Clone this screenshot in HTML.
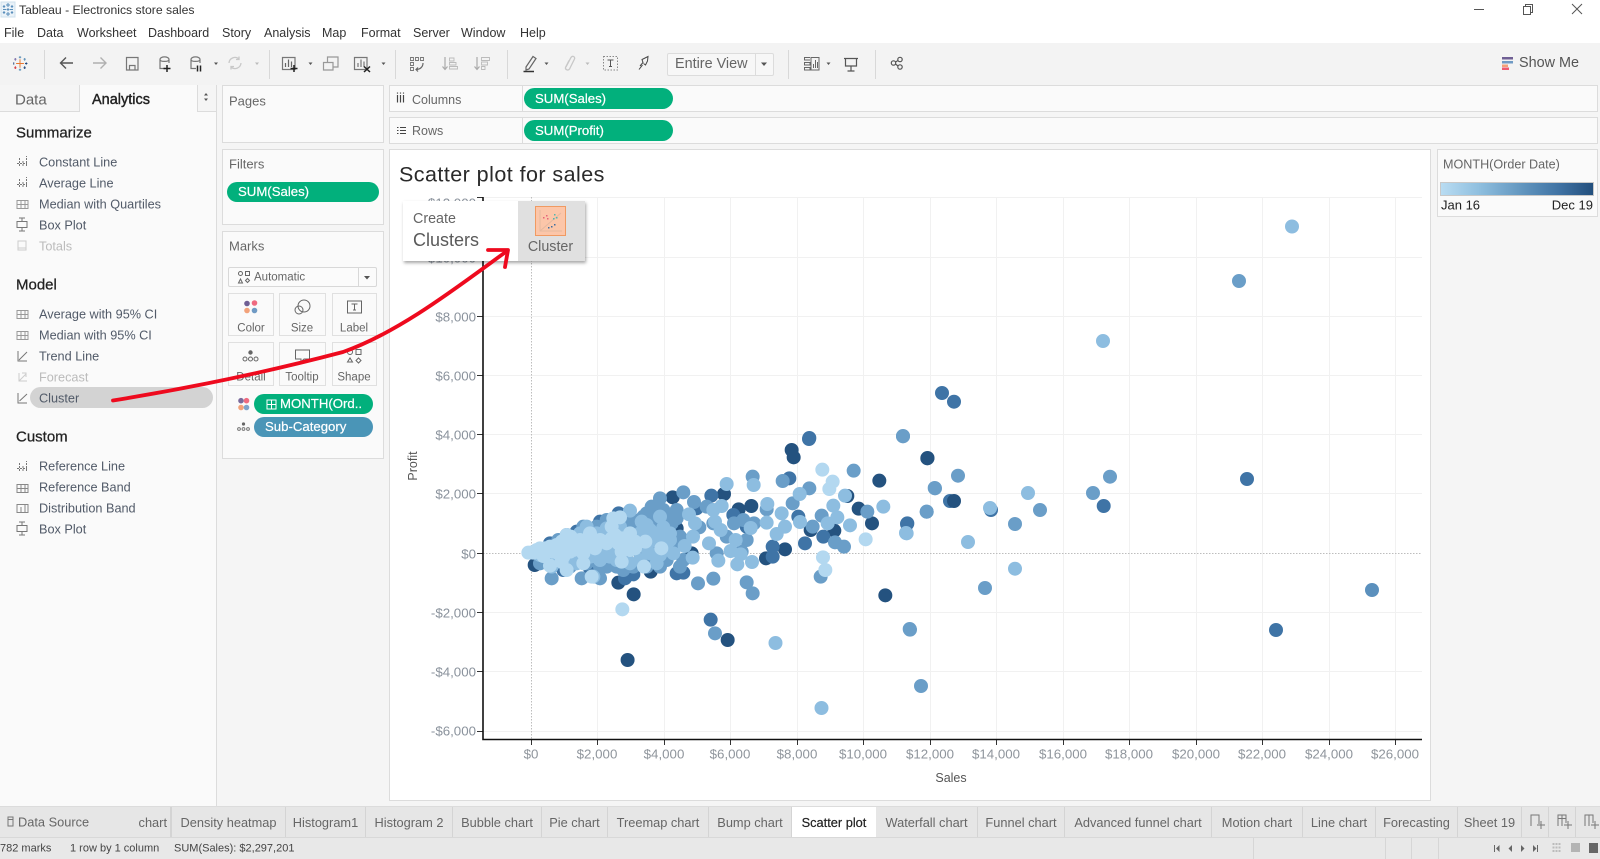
<!DOCTYPE html>
<html><head><meta charset="utf-8"><title>Tableau - Electronics store sales</title>
<style>
html,body{margin:0;padding:0;background:#f5f5f5}
body{position:relative;width:1600px;height:859px;overflow:hidden;font-family:"Liberation Sans",sans-serif;color:#555}
.b{position:absolute;box-sizing:border-box}
.p{position:absolute;box-sizing:border-box;background:#fafafa;border:1px solid #dcdcdc}
.t{position:absolute;white-space:nowrap;line-height:1;transform:translateY(-50%)}
.c{position:absolute;white-space:nowrap;line-height:1;transform:translate(-50%,-50%)}
.r{position:absolute;white-space:nowrap;line-height:1;transform:translateY(-50%);text-align:right}
.m{font-size:12.5px;color:#333}
.i{font-size:12.7px;color:#515a68;left:39px}
.h{font-size:15px;color:#222;left:16px;-webkit-text-stroke:.25px #222}
.pill{position:absolute;box-sizing:border-box;background:#02b07c;border-radius:11px;color:#fff;font-size:13.2px;line-height:20px;white-space:nowrap;-webkit-text-stroke:.2px #fff}
.btn{position:absolute;box-sizing:border-box;background:#fafafa;border:1px solid #e0e0e0}
.y{font-size:13.3px;color:#8a929c;right:1124px}
.x{font-size:13.3px;color:#8f959c}
.tab{position:absolute;box-sizing:border-box;top:807px;height:30px;border-right:1px solid #d4d4d4;font-size:12.8px;color:#666;line-height:32px;text-align:center;white-space:nowrap;overflow:hidden}
svg{position:absolute;left:0;top:0}
</style></head><body>

<!-- top bars -->
<div class="b" style="left:0;top:0;width:1600px;height:43px;background:#fff"></div>
<div class="b" style="left:0;top:43px;width:1600px;height:42px;background:#f3f3f3"></div>

<div class="t" style="left:19px;top:10px;font-size:12.2px;color:#333">Tableau - Electronics store sales</div>
<div class="t m" style="left:4px;top:33px">File</div>
<div class="t m" style="left:37px;top:33px">Data</div>
<div class="t m" style="left:77px;top:33px">Worksheet</div>
<div class="t m" style="left:148px;top:33px">Dashboard</div>
<div class="t m" style="left:222px;top:33px">Story</div>
<div class="t m" style="left:264px;top:33px">Analysis</div>
<div class="t m" style="left:322px;top:33px">Map</div>
<div class="t m" style="left:361px;top:33px">Format</div>
<div class="t m" style="left:413px;top:33px">Server</div>
<div class="t m" style="left:461px;top:33px">Window</div>
<div class="t m" style="left:520px;top:33px">Help</div>

<!-- entire view -->
<div class="b" style="left:667px;top:53px;width:107px;height:23px;background:#f7f7f7;border:1px solid #dcdcdc;border-radius:2px"></div>
<div class="b" style="left:755px;top:53px;width:1px;height:23px;background:#dcdcdc"></div>
<div class="t" style="left:675px;top:64px;font-size:14.4px;color:#666">Entire View</div>
<div class="t" style="left:1519px;top:63px;font-size:14.4px;color:#555">Show Me</div>

<!-- left panel -->
<div class="b" style="left:0;top:85px;width:217px;height:722px;background:#fafafa;border-right:1px solid #dcdcdc"></div>
<div class="b" style="left:0;top:85px;width:79px;height:27px;background:#f5f5f5;border-bottom:1px solid #dcdcdc"></div>
<div class="b" style="left:79px;top:85px;width:119px;height:27px;background:#fafafa;border-left:1px solid #dcdcdc;border-right:1px solid #dcdcdc"></div>
<div class="b" style="left:198px;top:85px;width:18px;height:27px;background:#f5f5f5;border-bottom:1px solid #dcdcdc"></div>
<div class="t" style="left:15px;top:100px;font-size:15px;color:#666">Data</div>
<div class="t" style="left:92px;top:99.500px;font-size:14.500px;color:#222;-webkit-text-stroke:.4px #222">Analytics</div>

<div class="t h" style="top:132.500px">Summarize</div>
<div class="t i" style="top:162.500px">Constant Line</div>
<div class="t i" style="top:183.500px">Average Line</div>
<div class="t i" style="top:204.500px">Median with Quartiles</div>
<div class="t i" style="top:225.500px">Box Plot</div>
<div class="t i" style="top:246.500px;color:#bbb">Totals</div>
<div class="t h" style="top:285px">Model</div>
<div class="t i" style="top:315px">Average with 95% CI</div>
<div class="t i" style="top:335.500px">Median with 95% CI</div>
<div class="t i" style="top:356.500px">Trend Line</div>
<div class="t i" style="top:377.500px;color:#bbb">Forecast</div>
<div class="b" style="left:30px;top:387px;width:183px;height:21px;border-radius:11px;background:#d3d3d3"></div>
<div class="t i" style="top:398.500px">Cluster</div>
<div class="t h" style="top:437px">Custom</div>
<div class="t i" style="top:467px">Reference Line</div>
<div class="t i" style="top:488px">Reference Band</div>
<div class="t i" style="top:508.500px">Distribution Band</div>
<div class="t i" style="top:529.500px">Box Plot</div>

<!-- cards -->
<div class="p" style="left:222px;top:85px;width:162px;height:58px"></div>
<div class="t" style="left:229px;top:101px;font-size:13px;color:#666">Pages</div>
<div class="p" style="left:222px;top:149px;width:162px;height:76px"></div>
<div class="t" style="left:229px;top:164px;font-size:13px;color:#666">Filters</div>
<div class="pill" style="left:227px;top:182px;width:152px;height:20px;padding-left:11px">SUM(Sales)</div>
<div class="p" style="left:222px;top:231px;width:162px;height:228px"></div>
<div class="t" style="left:229px;top:246px;font-size:13px;color:#666">Marks</div>
<div class="btn" style="left:228px;top:267px;width:149px;height:20px;background:#fbfbfb;border-color:#d8d8d8;border-radius:2px"></div>
<div class="b" style="left:358px;top:267px;width:1px;height:20px;background:#d8d8d8"></div>
<div class="t" style="left:254px;top:277.500px;font-size:11.500px;color:#666">Automatic</div>

<div class="btn" style="left:228px;top:293px;width:46px;height:43px"></div>
<div class="btn" style="left:279px;top:293px;width:47px;height:43px"></div>
<div class="btn" style="left:332px;top:293px;width:45px;height:43px"></div>
<div class="btn" style="left:228px;top:342px;width:46px;height:44px"></div>
<div class="btn" style="left:279px;top:342px;width:47px;height:44px"></div>
<div class="btn" style="left:332px;top:342px;width:45px;height:44px"></div>
<div class="c" style="left:251px;top:328.500px;font-size:11.500px;color:#666">Color</div>
<div class="c" style="left:302px;top:328.500px;font-size:11.500px;color:#666">Size</div>
<div class="c" style="left:354px;top:328.500px;font-size:11.500px;color:#666">Label</div>
<div class="c" style="left:251px;top:377.500px;font-size:11.500px;color:#666">Detail</div>
<div class="c" style="left:302px;top:377.500px;font-size:11.500px;color:#666">Tooltip</div>
<div class="c" style="left:354px;top:377.500px;font-size:11.500px;color:#666">Shape</div>
<div class="pill" style="left:254px;top:394px;width:119px;height:20px;padding-left:26px">MONTH(Ord..</div>
<div class="pill" style="left:254px;top:417px;width:119px;height:20px;padding-left:11px;background:#4a95b7">Sub-Category</div>

<!-- shelves -->
<div class="p" style="left:389px;top:85px;width:1209px;height:27px"></div>
<div class="p" style="left:389px;top:117px;width:1209px;height:27px"></div>
<div class="b" style="left:522px;top:85px;width:1px;height:27px;background:#dcdcdc"></div>
<div class="b" style="left:522px;top:117px;width:1px;height:27px;background:#dcdcdc"></div>
<div class="t" style="left:396px;top:98px;font-size:13.500px;color:#444">iii</div>
<div class="t" style="left:412px;top:100px;font-size:12.500px;color:#666">Columns</div>
<div class="t" style="left:412px;top:131px;font-size:12.500px;color:#666">Rows</div>
<div class="pill" style="left:524px;top:88px;width:149px;height:21px;padding-left:11px;line-height:21px">SUM(Sales)</div>
<div class="pill" style="left:524px;top:120px;width:149px;height:21px;padding-left:11px;line-height:21px">SUM(Profit)</div>

<!-- canvas -->
<div class="b" style="left:389px;top:149px;width:1042px;height:652px;background:#fff;border:1px solid #dcdcdc"></div>
<div class="p" style="left:1437px;top:149px;width:161px;height:68px"></div>
<div class="t" style="left:1443px;top:165px;font-size:12.600px;color:#666">MONTH(Order Date)</div>
<div class="b" style="left:1440px;top:182px;width:154px;height:14px;border:1px solid #c8c8c8;background:linear-gradient(90deg,#b9dcf2,#8fbfdf 25%,#5f93bd 55%,#3f72a3 78%,#234f7d)"></div>
<div class="t" style="left:1441px;top:205px;font-size:13px;color:#222">Jan 16</div>
<div class="r" style="right:7px;top:205px;font-size:13px;color:#222">Dec 19</div>

<div class="t" style="left:399px;top:175px;font-size:21.500px;letter-spacing:.45px;color:#2a2a2a">Scatter plot for sales</div>

<!-- chart svg -->
<svg width="1600" height="859" viewBox="0 0 1600 859">
 <g stroke="#f1f1f1" stroke-width="1" fill="none">
  <path d="M483 197.500H1422M483 257.500H1422M483 316.500H1422M483 375.500H1422M483 434.500H1422M483 493.500H1422M483 612.500H1422M483 671.500H1422M483 731.500H1422"/>
  <path d="M597.500 197V739M664.500 197V739M730.500 197V739M797.500 197V739M863.500 197V739M930.500 197V739M996.500 197V739M1063.500 197V739M1129.500 197V739M1196.500 197V739M1262.500 197V739M1329.500 197V739M1395.500 197V739"/>
 </g>
 <g stroke="#bdbdbd" stroke-width="1" stroke-dasharray="1.500 1.500" fill="none">
  <path d="M531.500 197V739M483 553.500H1422"/>
 </g>
 <g stroke="#333" stroke-width="1" fill="none">
  <path d="M477 197.500H483M477 257.500H483M477 316.500H483M477 375.500H483M477 434.500H483M477 493.500H483M477 553.500H483M477 612.500H483M477 671.500H483M477 731.500H483"/>
  <path d="M531.500 739V745M597.500 739V745M664.500 739V745M730.500 739V745M797.500 739V745M863.500 739V745M930.500 739V745M996.500 739V745M1063.500 739V745M1129.500 739V745M1196.500 739V745M1262.500 739V745M1329.500 739V745M1395.500 739V745"/>
 </g>
 <path d="M483 197V739.500H1422" stroke="#111" stroke-width="1.600" fill="none"/>

 <!-- dense cluster in zoom coords -->
 <g transform="translate(500 420) scale(.33333)" fill="none" stroke-width="42" stroke-linecap="round">
  <path stroke="#24527f" d="M875 90h0M881 112h0M1282 115h0M1138 182h0M1116 310h0M1076 266h0M1042 228h0M672 222h0M754 258h0M716 268h0M518 232h0M355 488h0M401 523h0M1156 526h0M855 388h0M798 415h0M683 660h0M1003 332h0M932 330h0M452 455h0M104 435h0M530 325h0M575 400h0M280 450h0"/>
  <path stroke="#3f74a6" d="M928 54h0M868 175h0M632 599h0M634 227h0M400 463h0M375 475h0M550 458h0M530 460h0M818 380h0M818 410h0M915 370h0M1222 310h0M895 290h0M970 350h0M356 280h0M300 305h0M230 335h0M150 370h0M270 445h0M190 450h0M420 430h0M590 265h0M700 285h0M1350 243h0M740 320h0"/>
  <path stroke="#6a9ec8" d="M1209 49h0M758 170h0M848 183h0M1061 152h0M928 205h0M878 250h0M1305 205h0M1280 275h0M1230 629h0M645 640h0M594 490h0M640 476h0M740 487h0M758 520h0M962 470h0M1102 275h0M1032 380h0M1005 367h0M965 287h0M938 320h0M800 268h0M762 310h0M702 310h0M730 300h0M550 217h0M480 235h0M455 260h0M582 246h0M500 290h0M470 310h0M530 295h0M598 322h0M460 380h0M490 420h0M550 420h0M520 390h0M640 310h0M680 350h0M740 360h0M650 400h0M420 320h0M320 440h0M280 420h0M350 340h0M155 475h0M245 475h0M300 475h0M200 400h0M230 420h0M260 430h0M300 410h0M330 430h0M350 400h0M380 420h0M420 400h0M450 420h0M480 440h0M500 420h0M520 380h0M540 350h0M500 330h0M470 350h0M440 350h0M400 330h0M370 310h0M340 320h0M300 330h0M270 350h0M320 300h0M290 320h0M440 280h0M470 270h0M510 290h0M530 270h0M350 440h0M120 430h0M160 420h0M210 440h0M300 440h0M370 450h0M540 440h0M620 260h0M725 395h0M490 270h0M515 310h0M450 300h0M430 290h0M400 300h0M380 290h0M250 320h0M270 330h0M200 345h0M175 360h0M400 440h0M440 440h0"/>
  <path stroke="#8dbde0" d="M680 192h0M761 195h0M899 222h0M1035 227h0M1000 257h0M1150 260h0M1050 316h0M1220 340h0M1012 292h0M983 310h0M855 320h0M830 342h0M800 308h0M802 252h0M845 280h0M900 306h0M665 258h0M640 270h0M567 283h0M585 310h0M645 305h0M662 330h0M752 324h0M707 360h0M692 393h0M722 403h0M655 422h0M712 433h0M756 426h0M627 370h0M579 350h0M554 378h0M578 413h0M490 322h0M440 315h0M425 305h0M390 272h0M480 290h0M460 340h0M510 360h0M520 400h0M470 430h0M200 360h0M240 340h0M290 340h0M320 325h0M350 300h0M380 345h0M420 340h0M450 330h0M480 350h0M500 370h0M450 400h0M420 420h0M390 430h0M350 420h0M310 400h0M280 390h0M260 410h0M230 430h0M180 425h0M150 410h0M120 405h0M300 380h0M330 390h0M155 440h0M300 420h0M330 410h0M270 410h0M220 415h0M360 320h0M330 340h0M400 350h0M420 370h0M390 370h0M300 395h0M260 320h0M460 360h0M440 385h0M480 405h0M510 340h0M280 470h0"/>
  <path stroke="#b3d8f0" d="M967 149h0M998 185h0M988 207h0M1097 358h0M969 412h0M976 450h0M367 568h0M432 440h0M365 425h0M484 385h0M436 365h0M405 365h0M360 292h0M340 295h0M390 340h0M270 340h0M212 350h0M335 355h0M300 360h0M355 370h0M250 400h0M200 380h0M270 370h0M230 370h0M150 380h0M120 385h0M95 397h0M110 390h0M135 385h0M170 375h0M200 450h0M150 437h0M275 470h0M250 430h0M190 410h0M390 390h0M85 398h0M160 395h0M220 390h0M310 365h0M120 395h0M140 395h0M180 390h0M210 395h0M240 385h0M260 365h0M290 365h0M320 370h0M345 345h0M375 360h0M405 385h0M365 395h0M215 375h0M185 365h0M175 400h0M100 398h0M130 408h0M240 360h0M200 345h0M185 425h0M285 385h0M335 320h0M365 355h0"/>
 </g>
 <!-- outliers in real coords -->
 <g fill="none" stroke-width="14" stroke-linecap="round">
  <path stroke="#24527f" d="M927.500 458h0M954 501h0M627.600 660h0"/>
  <path stroke="#3f74a6" d="M942 393h0M954 401.700h0M809 439h0M907 524h0M991 510h0M1247 479h0M1276 630h0M1103.700 506h0"/>
  <path stroke="#5b90bd" d="M1372 590h0"/>
  <path stroke="#6a9ec8" d="M1239 281h0M903 436h0M958 475.700h0M934.700 488h0M926.700 511.700h0M1040 510h0M1015 524h0M985 588h0M1093 493h0M1110 476.700h0M909.700 629h0M921 686h0"/>
  <path stroke="#8dbde0" d="M1292 226.500h0M1103 341h0M775.500 643h0M821.500 708h0M906 533h0M968 542h0M990 508h0M1015 568.700h0M1028 493h0"/>
 </g>

 <!-- toolbar dividers -->
 <g stroke="#d8d8d8" fill="none"><path d="M44.500 50V79M269.500 50V79M395.500 50V79M507.500 50V79M788.500 50V79M875.500 50V79"/></g>
 <!-- tableau logo small -->
 <g stroke-width="1.200" fill="none" transform="translate(20 63.500) scale(.78) translate(-20 -63.500)">
  <path stroke="#e8762d" d="M20 58V69M15 63.500H25"/>
  <path stroke="#5b8fb8" d="M20 54V57M18.500 55.500H21.500M20 70V73M18.500 71.500H21.500M26 56.500V60M24.500 58H27.500"/>
  <path stroke="#1f447a" d="M26 67V70.500M24.500 69H27.500M12 62V65M28 62V65M26.500 63.500H29.500"/>
  <path stroke="#d6333c" d="M14 67V70.500M12.500 69H15.500"/>
  <path stroke="#7b6fa8" d="M14 56.500V60M12.500 58H15.500"/>
 </g>
 <!-- title icon -->
 <rect x="1" y="2" width="14" height="15" fill="#eaf2f8" stroke="#cfe0ec"/>
 <g stroke="#5a8fbb" fill="none"><path d="M8 3V7M6 5H10M8 12V16M6 14H10M3 9.500H6M10 9.500H13M4 5V8M2.800 6.500H5.200M12 5V8M10.800 6.500H13.200M4 11V14M2.800 12.500H5.200M12 11V14M10.800 12.500H13.200M8 8V11M6.500 9.500H9.500"/></g>

 <!-- window controls -->
 <g stroke="#555" fill="none">
  <path d="M1474 9.500H1484"/>
  <path d="M1523.500 6.500H1530.500V14.500H1523.500ZM1525.500 6.500V4.500H1532.500V12.500H1530.500"/>
  <path d="M1572 4L1582 14M1582 4L1572 14"/>
 </g>

 <!-- toolbar icons -->
 <g fill="none" stroke="#555" stroke-width="1.200">
  <path d="M60.500 63H73M66 57.500L60.500 63L66 68.500" stroke-width="1.400"/>
  <path d="M93 63H106M100.500 57.500L106 63L100.500 68.500" stroke="#b0b0b0" stroke-width="1.400"/>
  <path d="M126.500 57.500H138V70H126.500ZM129.500 70V65.500H135V70" stroke="#777"/>
  <path d="M160 59.500C160 56 169 56 169 59.500V63M160 59.500V68.500H165M160 59.500C160 62 169 62 169 59.500" stroke="#777"/>
  <path d="M167 65V72M163.500 68.500H170.500" stroke="#222" stroke-width="1.500"/>
  <path d="M191 59.500C191 56 200 56 200 59.500V63M191 59.500V68.500H196M191 59.500C191 62 200 62 200 59.500" stroke="#777"/>
  <path d="M197.500 65.500V71.500M200.500 65.500V71.500" stroke="#222" stroke-width="1.500"/>
  <path d="M229 63a6 6 0 0 1 10-4M241 63a6 6 0 0 1-10 4M239 56.500V59.500H236M231 69.500V66.500H234" stroke="#c8c8c8" stroke-width="1.300"/>
  <path d="M282.500 57.500H295V69.500H282.500Z" stroke="#777"/>
  <path d="M285.500 67V63M288.500 67V59.500M291.500 67V61.500" stroke="#666"/>
  <path d="M294 65V72M290.500 68.500H297.500" stroke="#222" stroke-width="1.500"/>
  <path d="M323.500 62.500H333V70H323.500ZM327.500 62V57H338V67H333" stroke="#999"/>
  <path d="M354.500 57.500H367V69.500H354.500ZM358 67V63M361 67V59.500M364 67V61.500" stroke="#777"/>
  <path d="M364 66.500L370 72M370 66.500L364 72" stroke="#222" stroke-width="1.500"/>
  <path d="M410.500 57.500H413.500V60.500H410.500ZM415.500 57.500H418.500V60.500H415.500ZM420.500 57.500H423.500V60.500H420.500ZM410.500 62.500H413.500V65.500H410.500ZM410.500 67.500H413.500V70.500H410.500Z" stroke="#777" stroke-width=".9"/>
  <path d="M423 63C423 67 420 69.500 416 69.500M418 67.500L416 69.500L418 71.500" stroke="#666"/>
  <path d="M445 57V69M442.500 66.500L445 69.500L447.500 66.500" stroke="#aaa"/>
  <path d="M449.500 58H454V61H449.500ZM449.500 62.500H456V65H449.500ZM449.500 66.500H457.500V69H449.500Z" stroke="#bbb" stroke-width=".9"/>
  <path d="M477 57V69M474.500 66.500L477 69.500L479.500 66.500" stroke="#aaa"/>
  <path d="M481.500 57.500H489.500V60.500H481.500ZM481.500 62H487.500V65H481.500ZM481.500 66.500H485V69.500H481.500Z" stroke="#bbb" stroke-width=".9"/>
  <path d="M526 67L533 56.500L536 58.500L529 69L526 70Z" stroke="#666"/>
  <path d="M523.500 71.500H534" stroke="#333" stroke-width="1.500"/>
  <path d="M566 67L571 57.500C572.500 55 575.500 57 574.500 59L569.500 69C568 71 565 69.500 565.500 67.500L569 60.500" stroke="#c8c8c8" stroke-width="1.300"/>
  <rect x="603.500" y="56.500" width="14" height="13.500" stroke="#888" stroke-dasharray="1.500 1.500" stroke-width="1"/>
  <path d="M607.500 60H613.500M610.500 60V66.500M609 66.500H612" stroke="#555" stroke-width="1"/>
  <path d="M640 66L643 62.500L642 59.500L648 56.500L647.500 61L645.500 65L643.500 63.500M642.500 65L639 69.500" stroke="#444" stroke-width="1"/>
  <path d="M810 57.500H804.500V60H810M804.500 62.500H810V65H804.500ZM804.500 67.500H810V70H804.500ZM811 57.500H819V70H811ZM813.500 68V64M815.500 68V60M817.500 68V62" stroke="#666" stroke-width="1"/>
  <path d="M844 58.500H858M845.500 58.500V66H856.500V58.500M851 66V71M847.500 71H854.500" stroke="#555"/>
  <circle cx="893.500" cy="63" r="2.200" stroke="#555"/><circle cx="900" cy="59.500" r="2.200" stroke="#555"/><circle cx="900" cy="67" r="2.200" stroke="#555"/>
  <path d="M895.500 62L898 60.500M895.500 64L898 66" stroke="#555"/>
 </g>
 <!-- small dropdown carets -->
 <g fill="#555">
  <path d="M214 62.500h4l-2 2.500zM308.500 62.500h4l-2 2.500zM381.500 62.500h4l-2 2.500zM544.500 62.500h4l-2 2.500zM826.500 62.500h4l-2 2.500z"/>
  <path d="M761 62.500h6l-3 3.500zM204 95.500h4l-2-2.500zM204 98.500h4l-2 2.500zM364 276h6l-3 3.500z"/>
  <path fill="#bbb" d="M255 62.500h4l-2 2.500zM585.500 62.500h4l-2 2.500z"/>
 </g>
 <!-- show me -->
 <rect x="1502" y="57" width="11" height="2.500" fill="#6f5f94"/><rect x="1502" y="61" width="11" height="2.500" fill="#6f9ac4"/><rect x="1502" y="64.500" width="6" height="2.500" fill="#f2a07a"/><rect x="1502" y="67.500" width="7" height="2.500" fill="#ee5a6f"/>

 <!-- shelf icon rows -->
 <g stroke="#444" fill="none"><path d="M397 127.500H398.500M400 127.500H406M397 130.500H398.500M400 130.500H406M397 133.500H398.500M400 133.500H406"/></g>

 <!-- left list icons -->
 <g stroke="#777" stroke-width="1" fill="none">
  <path d="M17 163.500H27M19.500 166V158M23 166V160M26.500 166V156" stroke-dasharray="2 1"/>
  <path d="M17 184.500H27M19.500 187V179M23 187V181M26.500 187V177" stroke-dasharray="2 1"/>
  <path d="M17 200.500H28V208.500H17ZM17 204.500H28M21 200V209M25 200V209" stroke="#999"/>
  <path d="M17 221.500H27V227.500H17ZM22 218V221.500M22 227.500V231M19 218H25M19 231H25"/>
  <path d="M18 241H26V250H18ZM18 248H26" stroke="#ccc"/>
  <path d="M17 310.500H28V318.500H17ZM17 314.500H28M21 310V319M25 310V319" stroke="#999"/>
  <path d="M17 331.500H28V339.500H17ZM17 335.500H28M21 331V340M25 331V340" stroke="#999"/>
  <path d="M18 351V361H27M19 360L27 352"/>
  <path d="M19 373V381H27M19 381L26 374M22 373H26V377" stroke="#ccc"/>
  <path d="M18 393V403H27M19.500 401L27 394"/>
  <path d="M17 468.500H27M19.500 471V463M23 471V465M26.500 471V461" stroke-dasharray="2 1"/>
  <path d="M17 484.500H28V492.500H17ZM17 488.500H28M21 484V493M25 484V493" stroke="#888"/>
  <path d="M17 504.500H28V512.500H17ZM21 507V512M25 505V512" stroke="#888"/>
  <path d="M17 525.500H27V531.500H17ZM22 522V525.500M22 531.500V535M19 522H25M19 535H25"/>
 </g>

 <!-- automatic icon -->
 <g stroke="#666" fill="none">
  <circle cx="240.500" cy="273.500" r="2"/><rect x="245.500" y="271.500" width="4" height="4"/><path d="M238.500 283L240.500 279L242.500 283Z"/><path d="M247.500 278.500L249.500 280.500L247.500 282.500L245.500 280.500Z"/>
 </g>
 <!-- marks icons -->
 <circle cx="247" cy="303.500" r="2.800" fill="#6f5f94"/><circle cx="254.500" cy="303" r="2.800" fill="#ef6a80"/><circle cx="247" cy="310.500" r="2.800" fill="#f2a27a"/><circle cx="254.500" cy="310.500" r="2.800" fill="#6f9ac4"/>
 <g stroke="#666" fill="none"><circle cx="304" cy="306" r="6"/><circle cx="299" cy="310" r="4"/></g>
 <g stroke="#666" fill="none"><rect x="347.500" y="301" width="14" height="12"/><path d="M351.500 304H357.500M354.500 304V310M353 310H356"/></g>
 <g stroke="#666" fill="none"><circle cx="245" cy="359" r="2"/><circle cx="250.500" cy="359" r="2"/><circle cx="256" cy="359" r="2"/></g><circle cx="250.500" cy="352.500" r="2.200" fill="#666"/>
 <g stroke="#666" fill="none"><path d="M295.500 350H309.500V359H304L301 362V359H295.500Z"/></g>
 <g stroke="#666" fill="none"><circle cx="350" cy="352" r="2.500"/><rect x="356" y="349.500" width="5" height="5"/><path d="M347.500 362L350 358L352.500 362Z"/><path d="M358.500 358L361 360.500L358.500 363L356 360.500Z"/></g>
 <circle cx="241" cy="400.700" r="2.800" fill="#7a6a9c"/><circle cx="246.500" cy="400.700" r="2.800" fill="#ef6a80"/><circle cx="241" cy="407.500" r="2.800" fill="#f2a27a"/><circle cx="246.500" cy="407.500" r="2.800" fill="#7fa3cb"/>
 <g stroke="#777" fill="none"><circle cx="239" cy="429" r="1.400"/><circle cx="243.500" cy="429" r="1.400"/><circle cx="248" cy="429" r="1.400"/></g><circle cx="243.500" cy="424" r="1.600" fill="#666"/>
 <g stroke="#fff" fill="none"><path d="M267 400H276V409H267ZM271.500 400V409M267 404.500H276"/></g>
</svg>

<!-- axis labels -->
<div class="r y" style="top:203px">$12,000</div>
<div class="r y" style="top:258px">$10,000</div>
<div class="r y" style="top:317px">$8,000</div>
<div class="r y" style="top:376px">$6,000</div>
<div class="r y" style="top:435px">$4,000</div>
<div class="r y" style="top:494px">$2,000</div>
<div class="r y" style="top:554px">$0</div>
<div class="r y" style="top:613px">-$2,000</div>
<div class="r y" style="top:672px">-$4,000</div>
<div class="r y" style="top:731px">-$6,000</div>
<div class="c x" style="left:531px;top:754px">$0</div>
<div class="c x" style="left:597px;top:754px">$2,000</div>
<div class="c x" style="left:664px;top:754px">$4,000</div>
<div class="c x" style="left:730px;top:754px">$6,000</div>
<div class="c x" style="left:797px;top:754px">$8,000</div>
<div class="c x" style="left:863px;top:754px">$10,000</div>
<div class="c x" style="left:930px;top:754px">$12,000</div>
<div class="c x" style="left:996px;top:754px">$14,000</div>
<div class="c x" style="left:1063px;top:754px">$16,000</div>
<div class="c x" style="left:1129px;top:754px">$18,000</div>
<div class="c x" style="left:1196px;top:754px">$20,000</div>
<div class="c x" style="left:1262px;top:754px">$22,000</div>
<div class="c x" style="left:1329px;top:754px">$24,000</div>
<div class="c x" style="left:1395px;top:754px">$26,000</div>
<div class="c" style="left:951px;top:778px;font-size:12.500px;color:#555">Sales</div>
<div class="c" style="left:413px;top:466px;font-size:12.500px;color:#555;transform:translate(-50%,-50%) rotate(-90deg)">Profit</div>

<!-- callout -->
<div class="b" style="left:403px;top:201px;width:182px;height:60px;background:#fff;box-shadow:1px 2px 3px rgba(0,0,0,.35)"></div>
<div class="b" style="left:518px;top:201px;width:67px;height:60px;background:#e0e0e0"></div>
<div class="b" style="left:535px;top:206px;width:31px;height:30px;background:#fcc6a9;border:1px solid #f09a62"></div>
<svg width="1600" height="859" viewBox="0 0 1600 859">
 <path d="M540 210V231H562M540 231L561 213" stroke="#e5b9a0" fill="none"/>
 <g fill="#e6627a"><rect x="543" y="217" width="1.500" height="1.500"/><rect x="546" y="215" width="1.500" height="1.500"/><rect x="547" y="218" width="1.500" height="1.500"/></g>
 <g fill="#4fb6b0"><rect x="554" y="214" width="1.500" height="1.500"/><rect x="556" y="217" width="1.500" height="1.500"/><rect x="553" y="218" width="1.500" height="1.500"/></g>
 <g fill="#3f6d9f"><rect x="548" y="227" width="1.500" height="1.500"/><rect x="551" y="226" width="1.500" height="1.500"/><rect x="554" y="224" width="1.500" height="1.500"/></g>
</svg>
<div class="t" style="left:413px;top:219px;font-size:14.300px;color:#666">Create</div>
<div class="t" style="left:413px;top:240px;font-size:18px;color:#5a5a5a">Clusters</div>
<div class="c" style="left:550.500px;top:247px;font-size:14.300px;color:#666">Cluster</div>

<!-- tabs -->
<div class="b" style="left:0;top:806px;width:1600px;height:31px;background:#e6e6e6;border-top:1px solid #dcdcdc"></div>
<div class="t" style="left:18px;top:823px;font-size:12.800px;color:#666">Data Source</div>
<div class="tab" style="left:134px;width:37px;text-align:right;padding-right:3px">chart</div>
<div class="tab" style="left:171px;width:115px;border-left:1px solid #d4d4d4">Density heatmap</div>
<div class="tab" style="left:286px;width:80px">Histogram1</div>
<div class="tab" style="left:366px;width:87px">Histogram 2</div>
<div class="tab" style="left:453px;width:89px">Bubble chart</div>
<div class="tab" style="left:542px;width:66px">Pie chart</div>
<div class="tab" style="left:608px;width:101px">Treemap chart</div>
<div class="tab" style="left:709px;width:83px">Bump chart</div>
<div class="tab" style="left:792px;width:84px;background:#fff;color:#222;border:0;height:31px;-webkit-text-stroke:.2px #222">Scatter plot</div>
<div class="tab" style="left:876px;width:102px">Waterfall chart</div>
<div class="tab" style="left:978px;width:87px">Funnel chart</div>
<div class="tab" style="left:1065px;width:147px">Advanced funnel chart</div>
<div class="tab" style="left:1212px;width:91px">Motion chart</div>
<div class="tab" style="left:1303px;width:73px">Line chart</div>
<div class="tab" style="left:1376px;width:82px">Forecasting</div>
<div class="tab" style="left:1458px;width:64px">Sheet 19</div>
<div class="tab" style="left:1522px;width:27px"></div>
<div class="tab" style="left:1549px;width:27px"></div>
<svg width="1600" height="859" viewBox="0 0 1600 859">
 <g stroke="#777" fill="none"><path d="M8 817H13V826H8ZM8 819.500H13"/>
 <path d="M1531 826V815H1539V824M1541 821V829M1537 825H1545"/>
 <path d="M1558 826V815H1566V823M1558 818.500H1566M1562 815V826M1568 821V829M1564 825H1572"/>
 <path d="M1585 826V815H1593V823M1589 815V826M1595 821V829M1591 825H1599"/></g>
</svg>

<!-- status -->
<div class="b" style="left:0;top:837px;width:1600px;height:22px;background:#e8e8e8;border-top:1px solid #d8d8d8"></div>
<div class="t" style="left:0;top:849px;font-size:11px;color:#444">782 marks</div>
<div class="t" style="left:70px;top:849px;font-size:11px;color:#444">1 row by 1 column</div>
<div class="t" style="left:174px;top:849px;font-size:11px;color:#444">SUM(Sales): $2,297,201</div>
<div class="b" style="left:1253px;top:838px;width:1px;height:21px;background:#d6d6d6"></div>
<div class="b" style="left:1385px;top:838px;width:1px;height:21px;background:#d6d6d6"></div>
<div class="b" style="left:1411px;top:838px;width:1px;height:21px;background:#d6d6d6"></div>
<div class="b" style="left:1438px;top:838px;width:1px;height:21px;background:#d6d6d6"></div>
<svg width="1600" height="859" viewBox="0 0 1600 859">
 <g fill="#666">
  <path d="M1494 845H1495V852H1494ZM1499.500 845V852L1496 848.500Z"/>
  <path d="M1512 845V852L1508.500 848.500Z"/>
  <path d="M1521 845V852L1524.500 848.500Z"/>
  <path d="M1533 845V852L1536.500 848.500ZM1537 845H1538V852H1537Z"/>
 </g>
 <g fill="#bbb"><path d="M1552.500 843h2v2h-2zM1555.500 843h2v2h-2zM1558.500 843h2v2h-2zM1552.500 846.500h2v2h-2zM1555.500 846.500h2v2h-2zM1558.500 846.500h2v2h-2zM1552.500 850h2v2h-2zM1555.500 850h2v2h-2zM1558.500 850h2v2h-2z"/></g>
 <rect x="1571" y="843" width="9" height="9" fill="#b4b4b4"/>
 <rect x="1589" y="843" width="9" height="10" fill="#666"/>
 <!-- red arrow -->
 <g fill="none" stroke="#ee0a1e" stroke-width="3.800" stroke-linecap="round" stroke-linejoin="round">
  <path d="M113 400.500Q233 381 343 352C400 332 460 285 507 251"/>
  <path d="M488 250H508L505 267"/>
 </g>
</svg>
</body></html>
